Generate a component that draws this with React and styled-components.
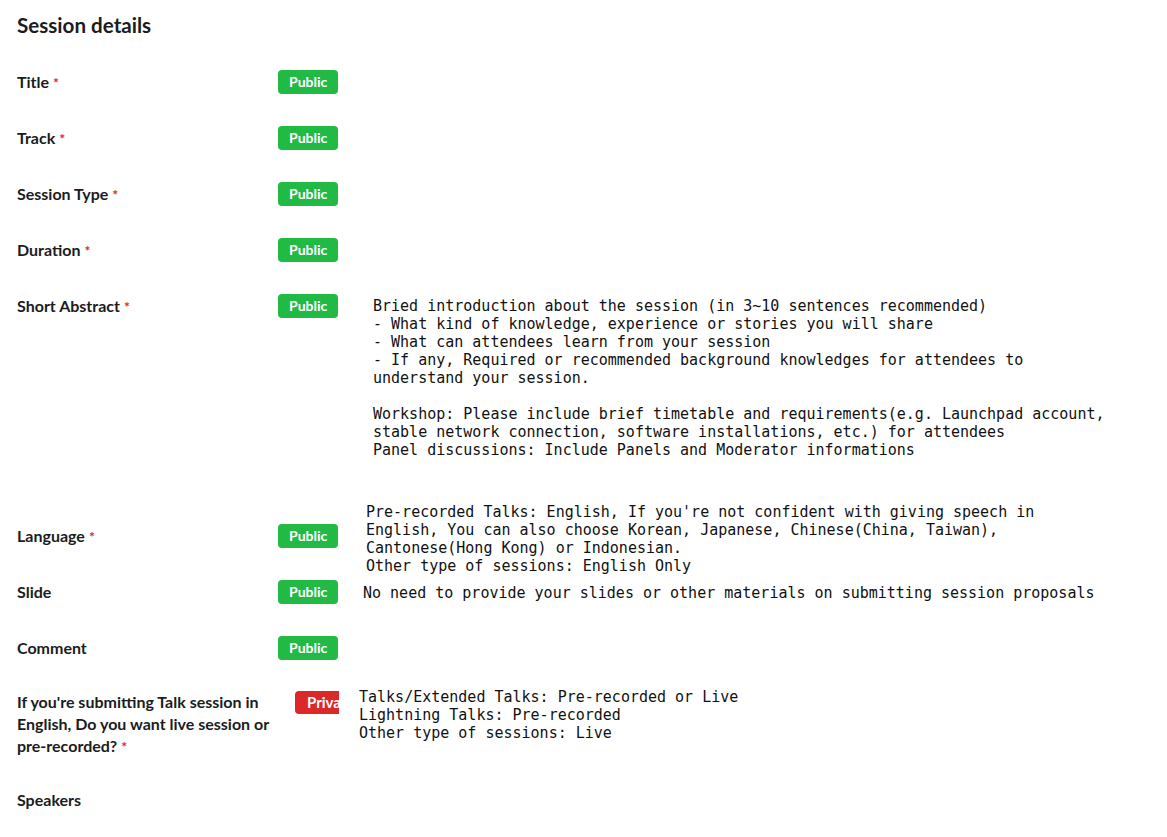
import React from "react";
import styled, { createGlobalStyle } from "styled-components";

const GlobalStyle = createGlobalStyle`
  body {
    margin: 0;
    background: #fff;
    font-family: Lato, "Noto Sans", sans-serif;
    color: rgba(0, 0, 0, 0.87);
  }
`;

const Page = styled.div`
  padding: 13px 17px 20px;
  width: 1167px;
  box-sizing: border-box;
`;

const Heading = styled.h3`
  margin: 0;
  font-size: 20.6px;
  line-height: 24px;
  font-weight: 700;
  color: #1b1c1d;
`;

const Rows = styled.div`
  display: flex;
  flex-direction: column;
  margin-top: 33px;
`;

const Row = styled.div`
  display: flex;
  align-items: flex-start;
  margin-top: ${(p) => p.$mt ?? 32}px;
  &:first-child {
    margin-top: 0;
  }
`;

const Label = styled.div`
  width: 261px;
  flex: none;
  font-size: 16px;
  font-weight: 700;
  line-height: ${(p) => (p.$multi ? 22 : 24)}px;
  height: ${(p) => (p.$multi ? "auto" : "24px")};
  margin-top: ${(p) => p.$top || 0}px;
  color: #1b1c1d;
`;

const Required = styled.span`
  color: #db2828;
  margin-left: 4px;
  font-size: 14px;
`;

const BadgeSlot = styled.div`
  width: 61px;
  flex: none;
  overflow: hidden;
  display: flex;
  padding-left: ${(p) => p.$shift || 0}px;
  margin-top: ${(p) => p.$top || 0}px;
  box-sizing: border-box;
`;

const Badge = styled.span`
  flex: none;
  height: ${(p) => (p.$private ? 23 : 24)}px;
  padding: 0 ${(p) => (p.$private ? 12 : 11)}px;
  border-radius: 4px;
  font-size: ${(p) => (p.$private ? 15 : 14)}px;
  font-weight: 700;
  line-height: ${(p) => (p.$private ? 23 : 24)}px;
  color: #fff;
  background: ${(p) => (p.$private ? "#db2828" : "#21ba45")};
`;

const Help = styled.pre`
  margin: ${(p) => p.$top || 0}px 0 0 ${(p) => p.$indent}px;
  font-family: "DejaVu Sans Mono", "Liberation Mono", monospace;
  font-size: 15px;
  line-height: 18px;
  color: #111;
  white-space: pre;
`;

const abstractHelp = `Bried introduction about the session (in 3~10 sentences recommended)
- What kind of knowledge, experience or stories you will share
- What can attendees learn from your session
- If any, Required or recommended background knowledges for attendees to
understand your session.

Workshop: Please include brief timetable and requirements(e.g. Launchpad account,
stable network connection, software installations, etc.) for attendees
Panel discussions: Include Panels and Moderator informations`;

const languageHelp = `Pre-recorded Talks: English, If you're not confident with giving speech in
English, You can also choose Korean, Japanese, Chinese(China, Taiwan),
Cantonese(Hong Kong) or Indonesian.
Other type of sessions: English Only`;

const slideHelp = `No need to provide your slides or other materials on submitting session proposals`;

const liveHelp = `Talks/Extended Talks: Pre-recorded or Live
Lightning Talks: Pre-recorded
Other type of sessions: Live`;

function Field({ label, required, mt, labelTop, badgeTop, shift, isPrivate, multi, help, helpIndent, helpTop, badge = true }) {
  return (
    <Row $mt={mt}>
      <Label $top={labelTop} $multi={multi}>
        {label}
        {required && <Required>*</Required>}
      </Label>
      {badge && (
        <BadgeSlot $top={badgeTop} $shift={shift}>
          <Badge $private={isPrivate}>{isPrivate ? "Private" : "Public"}</Badge>
        </BadgeSlot>
      )}
      {help && (
        <Help $indent={helpIndent} $top={helpTop}>
          {help}
        </Help>
      )}
    </Row>
  );
}

export default function App() {
  return (
    <Page>
      <GlobalStyle />
      <Heading>Session details</Heading>
      <Rows>
        <Field label="Title" required />
        <Field label="Track" required />
        <Field label="Session Type" required />
        <Field label="Duration" required />
        <Field label="Short Abstract" required help={abstractHelp} helpIndent={34} helpTop={3} />
        <Field
          label="Language"
          required
          mt={44}
          labelTop={21}
          badgeTop={21}
          help={languageHelp}
          helpIndent={27}
        />
        <Field label="Slide" mt={5} help={slideHelp} helpIndent={24} helpTop={4} />
        <Field label="Comment" />
        <Field
          label="If you're submitting Talk session in English, Do you want live session or pre-recorded?"
          required
          multi
          mt={28}
          labelTop={3}
          badgeTop={3}
          shift={17}
          isPrivate
          help={liveHelp}
          helpIndent={20}
        />
        <Field label="Speakers" mt={30} badge={false} />
      </Rows>
    </Page>
  );
}
